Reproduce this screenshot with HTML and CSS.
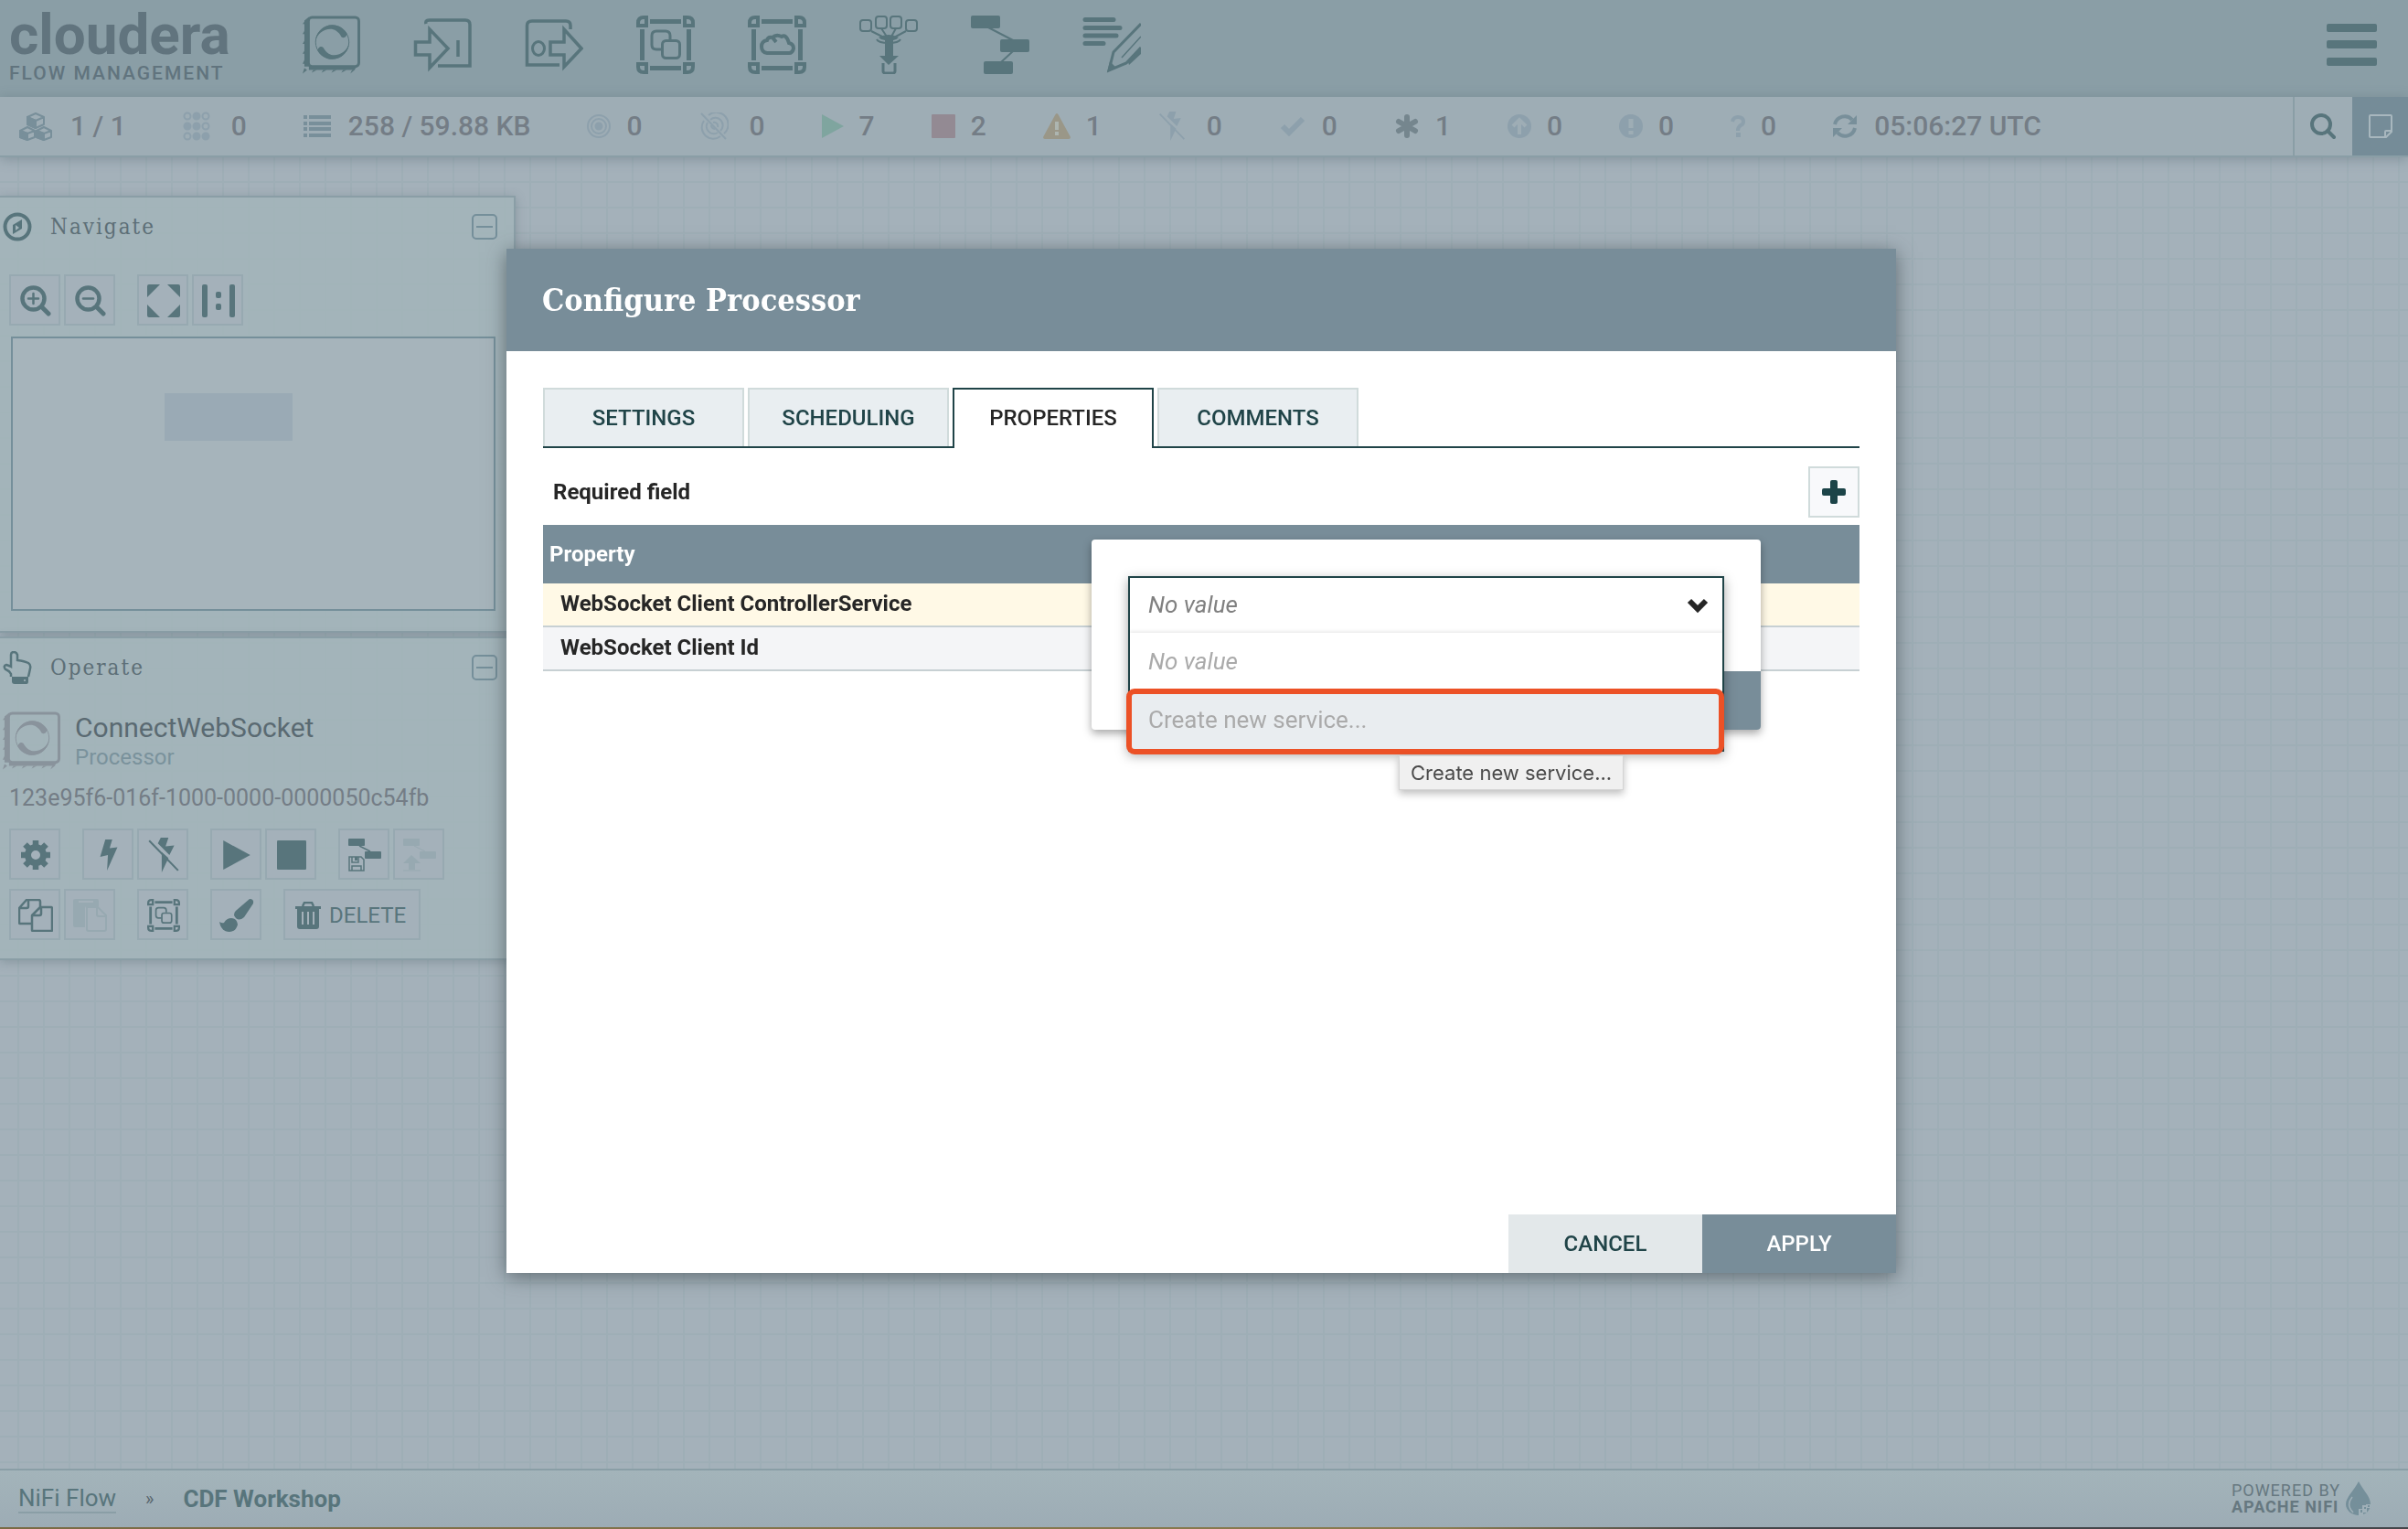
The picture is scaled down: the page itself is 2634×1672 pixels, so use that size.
FILE: index.html
```html
<!DOCTYPE html>
<html lang="en">
<head>
<meta charset="utf-8">
<title>Cloudera Flow Management</title>
<link rel="stylesheet" href="styles.css">
</head>
<body>
<svg class="sprite" aria-hidden="true">
  <symbol id="i-processor" viewBox="-1 0 65 64">
    <rect x="6.500" y="1.500" width="56" height="54.500" rx="4" fill="none" stroke="currentColor" stroke-width="3"/>
    <path d="M7 1L2 5V60H7ZM2 56H62L63 54L57 60H2Z" fill="currentColor"/>
    <path d="M3 5L0 9H3ZM3 15L0 20H3ZM3 26L0 31H3ZM3 37L0 42H3ZM3 47L0 53H3ZM2 58L0 64L5 60ZM12 60L10 63L16 60ZM23 60L21 63L27 60ZM34 60L32 63L38 60ZM45 60L43 63L49 60ZM55 60L53 64L59 59Z" fill="currentColor"/>
    <circle cx="33" cy="29" r="18.500" fill="none" stroke="currentColor"/>
    <path d="M14 29C15 18 23 10 33 10C40 10 46 14 49 19C50 22 46 26 43 23C40 17 35 14.500 31 14.500C23 14.500 16 20 14 29Z" fill="currentColor"/>
    <path d="M52 29C51 40 43 48 33 48C26 48 20 44 17 39C16 36 20 32 23 35C26 41 31 43.500 35 43.500C43 43.500 50 38 52 29Z" fill="currentColor"/>
  </symbol>
  <symbol id="i-input" viewBox="0 0 64 64" fill="none" stroke="currentColor" stroke-width="3.500">
    <path d="M14 9C13 5 16 5 18 5H57Q62 5 62 10V55H27M49 27V45"/>
    <path d="M2.500 29V43H18V57L38 36L18 15V29Z"/>
  </symbol>
  <symbol id="i-output" viewBox="0 0 64 64" fill="none" stroke="currentColor" stroke-width="3.500">
    <path d="M50 15V11Q50 6 45 6H8Q2.500 6 2.500 11V54H38"/>
    <ellipse cx="15" cy="36" rx="6.500" ry="7.500" stroke-width="3"/>
    <path d="M28 29V43H43V56L62 36L43 15V29Z"/>
  </symbol>
  <symbol id="i-frame" viewBox="0 0 64 64" fill="none" stroke="currentColor">
    <path d="M15 6.500H49M15 57.500H49M6.500 15V49M57.500 15V49" stroke-width="5"/>
    <path d="M11 11V2H8Q2 2 2 8V11ZM53 11V2H56Q62 2 62 8V11ZM11 53V62H8Q2 62 2 56V53ZM53 53V62H56Q62 62 62 56V53Z" stroke-width="4"/>
  </symbol>
  <symbol id="i-group" viewBox="0 0 64 64" fill="none" stroke="currentColor" stroke-width="3">
    <use href="#i-frame"/>
    <path d="M28 37H22Q17 37 17 32V22Q17 17 22 17H32Q37 17 37 22V26"/>
    <rect x="28.500" y="27.500" width="19" height="19" rx="4"/>
  </symbol>
  <symbol id="i-remote" viewBox="0 0 64 64" fill="none" stroke="currentColor">
    <use href="#i-frame"/>
    <path d="M21 41Q15 40 15 34Q15 28 21 27Q22 23 27 24Q31 20 37 23Q42 20 45 30Q50 31 50 36Q49 41 45 41ZM27 24L31 29" stroke-width="4"/>
  </symbol>
  <symbol id="i-funnel" viewBox="0 0 64 64" fill="none" stroke="currentColor" stroke-width="2">
    <rect x="1" y="5" width="12" height="12" rx="3"/><rect x="18" y="1" width="12" height="13" rx="3"/><rect x="34" y="1" width="12" height="13" rx="3"/><rect x="51" y="5" width="12" height="12" rx="3"/>
    <path d="M13 17L27 24M24 14L30 23M40 14L35 23M51 17L38 24M19 26Q21 30 32 30Q43 30 45 26"/>
    <path d="M26 52V61Q26 63 29 63H36Q39 63 39 61V52" stroke-width="3"/>
    <path d="M21 24Q32 18 43 24Q40 27 37 27V44H43L32 54L22 44H28V27Q24 27 21 24Z" fill="currentColor" stroke="none"/>
  </symbol>
  <symbol id="i-template" viewBox="0 0 64 64" fill="currentColor">
    <rect width="32" height="14" rx="2"/><rect x="32" y="26" width="32" height="14" rx="2"/><rect x="14" y="50" width="32" height="14" rx="2"/>
    <path d="M19 13L46 27M46 39L33 51" stroke="currentColor" stroke-width="2"/>
  </symbol>
  <symbol id="i-label" viewBox="0 0 64 64" fill="none" stroke="currentColor">
    <path d="M3 4.500H34M3 13.500H41M3 22H37M3 30.500H23" stroke-width="5" stroke-linecap="round"/>
    <path d="M64 9L34 40L29 60L48 52L64 35" stroke-width="3"/>
    <path d="M43 46L64 23" stroke-width="1.500"/>
    <path d="M30 50L27 62L37 57ZM50 51L64 35V42L51 54Z" fill="currentColor" stroke="none"/>
  </symbol>
  <symbol id="i-cubes" viewBox="0 0 38 32" fill="none" stroke="currentColor" stroke-width="2" stroke-linejoin="round">
    <path d="M19 2L28 6V14L19 18L10 14V6ZM10 6L19 10L28 6M10 17L18 21V28L10 31L2 28V21ZM2 21L10 24L18 21M28 17L36 21V28L28 31L20 28V21ZM20 21L28 24L36 21"/>
    <path d="M19 10V18L10 14V6ZM10 24V31L2 28V21ZM28 24V31L20 28V21Z" fill="currentColor"/>
  </symbol>
  <symbol id="i-threads" viewBox="0 0 30 32" fill="none" stroke="currentColor" stroke-width="2">
    <circle cx="5" cy="5" r="3.500"/><circle cx="25" cy="5" r="3.500"/><circle cx="25" cy="16" r="3.500"/><circle cx="5" cy="27" r="3.500"/>
    <g fill="currentColor"><circle cx="15" cy="5" r="3.500"/><circle cx="5" cy="16" r="3.500"/><circle cx="15" cy="16" r="3.500"/><circle cx="15" cy="27" r="3.500"/><circle cx="25" cy="27" r="3.500"/></g>
  </symbol>
  <symbol id="i-list" viewBox="0 0 30 24"><path d="M0 2H4M6 2H30M0 9H4M6 9H30M0 15H4M6 15H30M0 22H4M6 22H30" stroke="currentColor" stroke-width="4"/></symbol>
  <symbol id="i-target" viewBox="0 0 26 26" fill="none" stroke="currentColor" stroke-width="2"><circle cx="13" cy="13" r="12"/><circle cx="13" cy="13" r="8"/><circle cx="13" cy="13" r="3.500" fill="currentColor"/></symbol>
  <symbol id="i-target-off" viewBox="0 0 30 30" fill="none" stroke="currentColor" stroke-width="2"><path d="M9 3A12.500 12.500 0 0 1 26 23M22 26A12.500 12.500 0 0 1 4 9M11 8A8 8 0 0 1 22 20M19 22A8 8 0 0 1 8 11M14 11A4 4 0 0 1 19 16M16 18A4 4 0 0 1 12 14M1 1L28 29"/></symbol>
  <symbol id="i-play" viewBox="0 0 24 26"><path d="M0 0L24 13L0 26Z" fill="currentColor"/></symbol>
  <symbol id="i-stop" viewBox="0 0 26 26"><rect width="26" height="26" rx="1" fill="currentColor"/></symbol>
  <symbol id="i-warn" viewBox="0 0 30 28"><path d="M15 0Q16 0 17 2L30 26Q30 28 28 28H2Q0 28 0 26L13 2Q14 0 15 0Z" fill="currentColor"/><path d="M15 9V18M15 20V24" stroke="#adb5b0" stroke-width="4"/></symbol>
  <symbol id="i-bolt" viewBox="0 0 20 36"><path d="M6 0H14L11 10L20 9L8 36L9 18L0 20Z" fill="currentColor"/></symbol>
  <symbol id="i-bolt-off" viewBox="0 0 32 36"><path d="M13 0H21L18 9L27 8L22 18L10 6ZM14 15L21 21L14 36Z" fill="currentColor"/><path d="M1 3L31 34" stroke="currentColor" stroke-width="2"/></symbol>
  <symbol id="i-check" viewBox="0 0 28 22"><path d="M3 11L10 18L25 3" fill="none" stroke="currentColor" stroke-width="6"/></symbol>
  <symbol id="i-asterisk" viewBox="0 0 26 26"><path d="M13 3V23M4 8L22 18M4 18L22 8" stroke="currentColor" stroke-width="6" stroke-linecap="round"/></symbol>
  <symbol id="i-up" viewBox="0 0 26 26"><circle cx="13" cy="13" r="13" fill="currentColor"/><path d="M13 22V7M6 13L13 6L20 13" fill="none" stroke="#9eadb5" stroke-width="4"/></symbol>
  <symbol id="i-exclaim" viewBox="0 0 26 26"><circle cx="13" cy="13" r="13" fill="currentColor"/><path d="M13 5V15M13 18V22" stroke="#9eadb5" stroke-width="5"/></symbol>
  <symbol id="i-question" viewBox="0 0 16 26"><path d="M2 8Q3 3 8 3Q14 3 14 8Q14 11 11 12Q8 14 8 18" fill="none" stroke="currentColor" stroke-width="4"/><rect x="6" y="20" width="5" height="5" fill="currentColor"/></symbol>
  <symbol id="i-refresh" viewBox="0 0 26 26" fill="none" stroke="currentColor" stroke-width="4"><path d="M2 11A11 11 0 0 1 21 6M24 15A11 11 0 0 1 5 20"/><path d="M26 1V11H16ZM0 25V15H10Z" fill="currentColor" stroke="none"/></symbol>
  <symbol id="i-search" viewBox="0 0 28 28" fill="none" stroke="currentColor"><circle cx="12" cy="12" r="10" stroke-width="4"/><path d="M19 19L26 26" stroke-width="4" stroke-linecap="round"/></symbol>
  <symbol id="i-note" viewBox="0 0 26 26" fill="none" stroke="currentColor" stroke-width="2"><path d="M2 1H24Q25 1 25 2V19L19 25H2Q1 25 1 24V2Q1 1 2 1ZM25 18H19Q18 18 18 19V25"/></symbol>
  <symbol id="i-menu" viewBox="0 0 56 46"><path d="M2 0H53Q55 0 55 2V7Q55 9 53 9H2Q0 9 0 7V2Q0 0 2 0ZM2 18H53Q55 18 55 20V25Q55 27 53 27H2Q0 27 0 25V20Q0 18 2 18ZM2 37H53Q55 37 55 39V44Q55 46 53 46H2Q0 46 0 44V39Q0 37 2 37Z" fill="currentColor"/></symbol>
  <symbol id="i-compass" viewBox="0 0 32 32"><circle cx="16" cy="16" r="13.500" fill="none" stroke="currentColor" stroke-width="4"/><path d="M21 8V18L11 24V14Z" fill="currentColor"/><path d="M14 14L18 17L14 20Z" fill="#a3b4ba"/></symbol>
  <symbol id="i-collapse" viewBox="0 0 28 28" fill="none" stroke="currentColor" stroke-width="2"><rect x="1" y="1" width="26" height="26" rx="4"/><path d="M5 14H23"/></symbol>
  <symbol id="i-zoom-in" viewBox="0 0 34 34" fill="none" stroke="currentColor" stroke-linecap="round"><circle cx="14.500" cy="14.500" r="12" stroke-width="4.500"/><path d="M24 24L31 31" stroke-width="5"/><path d="M9 14.500H20M14.500 9V20" stroke-width="2.500"/></symbol>
  <symbol id="i-zoom-out" viewBox="0 0 34 34" fill="none" stroke="currentColor" stroke-linecap="round"><circle cx="14.500" cy="14.500" r="12" stroke-width="4.500"/><path d="M24 24L31 31" stroke-width="5"/><path d="M9 14.500H20" stroke-width="2.500"/></symbol>
  <symbol id="i-fit" viewBox="0 0 36 36"><path d="M2 0H14L0 14V2Q0 0 2 0ZM22 0H34Q36 0 36 2V14ZM0 22L14 36H2Q0 36 0 34ZM36 22V34Q36 36 34 36H22Z" fill="currentColor"/></symbol>
  <symbol id="i-actual" viewBox="0 0 36 36" fill="currentColor"><rect width="6" height="36" rx="2"/><rect x="30" width="6" height="36" rx="2"/><rect x="15" y="8" width="6" height="7" rx="2"/><rect x="15" y="21" width="6" height="7" rx="2"/></symbol>
  <symbol id="i-hand" viewBox="0 0 32 36"><path d="M9 28V25C7 21 5 21 3 20Q0 16 4 15Q7 16 9 17V4Q9 1 12 1Q15 1 16 4V10Q24 11 28 13Q31 15 30 19Q29 24 28 28" fill="none" stroke="currentColor" stroke-width="2.500"/><path d="M10 28H28V33Q28 36 26 36H13Q10 36 10 33Z" fill="currentColor"/><circle cx="24" cy="32" r="1" fill="#a3b4ba"/></symbol>
  <symbol id="i-gear" viewBox="0 0 32 32" fill="none" stroke="currentColor"><circle cx="16" cy="16" r="8.500" stroke-width="7"/><path d="M16 0V6M16 26V32M0 16H6M26 16H32M4.500 4.500L9 9M23 23L27.500 27.500M4.500 27.500L9 23M23 9L27.500 4.500" stroke-width="6.500"/></symbol>
  <symbol id="i-template-save" viewBox="0 0 36 36"><g fill="currentColor"><rect width="18" height="8" rx="1"/><rect x="18" y="14" width="18" height="8" rx="1"/></g><path d="M12 8L24 14M1 20H14L17 23V35H1ZM4 20V26H11V20M4 35V30H14V35" fill="none" stroke="currentColor" stroke-width="1.500"/><path d="M7 20H10V24H7Z" fill="currentColor"/></symbol>
  <symbol id="i-template-upload" viewBox="0 0 36 36" fill="currentColor"><rect width="18" height="8" rx="1"/><rect x="18" y="14" width="18" height="8" rx="1"/><path d="M12 8L24 14M0 35H19" stroke="currentColor"/><path d="M9 18L19 27H13V34H6V27H0Z"/></symbol>
  <symbol id="i-copy" viewBox="0 0 38 36" fill="none" stroke="currentColor" stroke-width="2.500" stroke-linejoin="round"><path d="M14 27H2Q1 27 1 26V10L9 1H22Q24 1 24 3V9M1 10H9Q11 10 11 8V1M15 18L24 9H36Q37 9 37 11V34Q37 35 36 35H16Q15 35 15 34ZM15 18H23Q25 18 25 16V9"/></symbol>
  <symbol id="i-paste" viewBox="0 0 38 36"><path d="M3 0H26Q28 0 28 2V8H15Q13 8 13 10V31H2Q0 31 0 29V2Q0 0 3 0Z" fill="currentColor"/><path d="M6 3H22" stroke="#a4b1ba" stroke-width="2"/><path d="M15 9H27L36 18V33Q36 35 34 35H17Q15 35 15 33ZM26 9V17Q26 19 28 19H36" fill="none" stroke="currentColor" stroke-width="2"/></symbol>
  <symbol id="i-brush" viewBox="0 0 38 36" fill="currentColor"><path d="M33 0Q38 0 37 5L27 20Q20 26 16 18Q16 14 19 12Z"/><path d="M13 21Q19 21 20 28Q18 36 11 36Q2 36 0 25Q3 27 5 26Q8 21 13 21Z"/></symbol>
  <symbol id="i-trash" viewBox="0 0 28 30"><path d="M0 5H28V8H26V27Q26 30 23 30H5Q2 30 2 27V8H0Z" fill="currentColor"/><path d="M8 11V25M14 11V25M20 11V25" stroke="#a4b1ba" stroke-width="2"/><path d="M8 5L10 1H18L20 5" fill="none" stroke="currentColor" stroke-width="2.500"/></symbol>
  <symbol id="i-plus" viewBox="0 0 26 26"><path d="M11 0H15Q17 0 17 2V9H24Q26 9 26 11V15Q26 17 24 17H17V24Q17 26 15 26H11Q9 26 9 24V17H2Q0 17 0 15V11Q0 9 2 9H9V2Q9 0 11 0Z" fill="currentColor"/></symbol>
  <symbol id="i-chevron" viewBox="0 0 24 18"><path d="M3 4L12 13L21 4" fill="none" stroke="currentColor" stroke-width="6"/></symbol>
  <symbol id="i-drop" viewBox="0 0 28 38"><path d="M14 0C19 10 27 16 27 25C27 32 21 37 14 37C7 37 0 32 0 25C0 17 9 10 14 0Z" fill="currentColor"/><path d="M7 17C2 23 3 29 8 34" fill="none" stroke="#a0b0b8" stroke-width="1.500"/><path d="M14 30H18V26H22V25H27V29H23V34H19V38H14Z" fill="#a0b0b8"/><path d="M16 31H18V34H16ZM20 28H22V30H20ZM24 26H26V28H24Z" fill="currentColor"/></symbol>
</svg>

<header class="topbar">
  <div class="logo"><span class="logo-name">cloudera</span><span class="logo-sub">FLOW MANAGEMENT</span></div>
  <nav class="components" aria-label="Components">
    <button type="button" aria-label="Processor"><svg width="64" height="64"><use href="#i-processor"/></svg></button>
    <button type="button" aria-label="Input port"><svg width="64" height="64"><use href="#i-input"/></svg></button>
    <button type="button" aria-label="Output port"><svg width="64" height="64"><use href="#i-output"/></svg></button>
    <button type="button" aria-label="Process group"><svg width="64" height="64"><use href="#i-group"/></svg></button>
    <button type="button" aria-label="Remote process group"><svg width="64" height="64"><use href="#i-remote"/></svg></button>
    <button type="button" aria-label="Funnel"><svg width="64" height="64"><use href="#i-funnel"/></svg></button>
    <button type="button" aria-label="Template"><svg width="64" height="64"><use href="#i-template"/></svg></button>
    <button type="button" aria-label="Label"><svg width="64" height="64"><use href="#i-label"/></svg></button>
  </nav>
  <button type="button" class="menu" aria-label="Menu"><svg width="56" height="46"><use href="#i-menu"/></svg></button>
</header>

<div class="status">
  <ul class="stats">
    <li class="mid"><svg width="38" height="32"><use href="#i-cubes"/></svg>1 / 1</li>
    <li class="wide"><svg width="30" height="32"><use href="#i-threads"/></svg>0</li>
    <li class="mid"><svg width="30" height="24"><use href="#i-list"/></svg>258 / 59.88 KB</li>
    <li><svg width="26" height="26"><use href="#i-target"/></svg>0</li>
    <li class="wide"><svg width="32" height="30"><use href="#i-target-off"/></svg>0</li>
    <li class="running"><svg width="24" height="26"><use href="#i-play"/></svg>7</li>
    <li class="stopped"><svg width="26" height="26"><use href="#i-stop"/></svg>2</li>
    <li class="invalid"><svg width="30" height="28"><use href="#i-warn"/></svg>1</li>
    <li class="wide"><svg width="30" height="32"><use href="#i-bolt-off"/></svg>0</li>
    <li><svg width="30" height="22"><use href="#i-check"/></svg>0</li>
    <li class="strong"><svg width="28" height="26"><use href="#i-asterisk"/></svg>1</li>
    <li><svg width="26" height="26"><use href="#i-up"/></svg>0</li>
    <li><svg width="26" height="26"><use href="#i-exclaim"/></svg>0</li>
    <li><svg width="16" height="26"><use href="#i-question"/></svg>0</li>
    <li class="mid"><svg width="26" height="26"><use href="#i-refresh"/></svg>05:06:27 UTC</li>
  </ul>
  <button type="button" class="search" aria-label="Search"><svg width="28" height="28"><use href="#i-search"/></svg></button>
  <button type="button" class="bulletins" aria-label="Bulletins"><svg width="26" height="26"><use href="#i-note"/></svg></button>
</div>

<main class="canvas">
  <section class="panel">
    <div class="panel-head">
      <svg width="32" height="32"><use href="#i-compass"/></svg><h2>Navigate</h2>
      <button type="button" class="collapse" aria-label="Collapse"><svg width="28" height="28"><use href="#i-collapse"/></svg></button>
    </div>
    <div class="tools">
      <button type="button" aria-label="Zoom in"><svg width="34" height="34"><use href="#i-zoom-in"/></svg></button>
      <button type="button" aria-label="Zoom out"><svg width="34" height="34"><use href="#i-zoom-out"/></svg></button>
      <button type="button" class="split" aria-label="Fit"><svg width="36" height="36"><use href="#i-fit"/></svg></button>
      <button type="button" aria-label="Actual size"><svg width="36" height="36"><use href="#i-actual"/></svg></button>
    </div>
    <div class="birdseye"><div class="birdseye-item"></div></div>
  </section>
  <section class="panel">
    <div class="panel-head">
      <svg width="32" height="36"><use href="#i-hand"/></svg><h2>Operate</h2>
      <button type="button" class="collapse" aria-label="Collapse"><svg width="28" height="28"><use href="#i-collapse"/></svg></button>
    </div>
    <div class="selection">
      <svg width="64" height="64"><use href="#i-processor"/></svg>
      <div><div class="selection-name">ConnectWebSocket</div><div class="selection-type">Processor</div></div>
    </div>
    <div class="uuid">123e95f6-016f-1000-0000-0000050c54fb</div>
    <div class="tools">
      <button type="button" aria-label="Configure"><svg width="32" height="32"><use href="#i-gear"/></svg></button>
      <button type="button" class="split" aria-label="Enable"><svg width="20" height="34"><use href="#i-bolt"/></svg></button>
      <button type="button" aria-label="Disable"><svg width="34" height="38"><use href="#i-bolt-off"/></svg></button>
      <button type="button" class="split" aria-label="Start"><svg width="30" height="32"><use href="#i-play"/></svg></button>
      <button type="button" aria-label="Stop"><svg width="32" height="32"><use href="#i-stop"/></svg></button>
      <button type="button" class="split" aria-label="Create template"><svg width="36" height="36"><use href="#i-template-save"/></svg></button>
      <button type="button" disabled aria-label="Upload template"><svg width="36" height="36"><use href="#i-template-upload"/></svg></button>
    </div>
    <div class="tools second">
      <button type="button" aria-label="Copy"><svg width="38" height="36"><use href="#i-copy"/></svg></button>
      <button type="button" disabled aria-label="Paste"><svg width="38" height="36"><use href="#i-paste"/></svg></button>
      <button type="button" class="split" aria-label="Group"><svg width="36" height="36"><use href="#i-group"/></svg></button>
      <button type="button" class="split" aria-label="Change color"><svg width="38" height="36"><use href="#i-brush"/></svg></button>
      <button type="button" class="split delete"><svg width="28" height="30"><use href="#i-trash"/></svg>DELETE</button>
    </div>
  </section>
</main>

<footer class="bottombar">
  <nav class="crumbs" aria-label="Breadcrumb"><a href="#">NiFi Flow</a><span class="sep">»</span><strong>CDF Workshop</strong></nav>
  <div class="powered"><div>POWERED BY<br><b>APACHE NIFI</b></div><svg width="28" height="38"><use href="#i-drop"/></svg></div>
</footer>
<div class="desk-edge"></div>

<div class="overlay">
  <div class="dialog" role="dialog" aria-labelledby="dialog-title">
    <div class="dialog-head"><h1 id="dialog-title">Configure Processor</h1></div>
    <div class="dialog-body">
      <div class="tabs" role="tablist">
        <button type="button" role="tab">SETTINGS</button>
        <button type="button" role="tab">SCHEDULING</button>
        <button type="button" role="tab" aria-selected="true">PROPERTIES</button>
        <button type="button" role="tab">COMMENTS</button>
      </div>
      <div class="required"><span>Required field</span><button type="button" class="add" aria-label="Add property"><svg width="26" height="26"><use href="#i-plus"/></svg></button></div>
      <table class="properties">
        <thead><tr><th scope="col">Property</th></tr></thead>
        <tbody>
          <tr class="editing"><td>WebSocket Client ControllerService</td></tr>
          <tr><td>WebSocket Client Id</td></tr>
        </tbody>
      </table>
      <div class="editor">
        <div class="combo">
          <div class="combo-field">
            <select aria-label="WebSocket Client ControllerService"><option>No value</option></select>
            <svg width="24" height="18"><use href="#i-chevron"/></svg>
          </div>
          <ul class="options">
            <li class="unset">No value</li>
            <li class="hover">Create new service...</li>
          </ul>
          <div class="highlight"></div>
          <div class="tooltip" role="tooltip">Create new service...</div>
        </div>
        <div class="editor-actions"></div>
      </div>
    </div>
    <div class="dialog-actions"><button type="button" class="cancel">CANCEL</button><button type="button" class="apply">APPLY</button></div>
  </div>
</div>
</body>
</html>
```
FILE: styles.css
```css
* { box-sizing: border-box; }

body {
  margin: 0;
  min-height: 100vh;
  display: flex;
  flex-direction: column;
  overflow: hidden;
  font-family: Roboto, "Liberation Sans", sans-serif;
  font-size: 24px;
  line-height: 28px;
  color: #747d86;
  background: #a4b1ba;
}

h1, h2, ul { margin: 0; padding: 0; }
ul { list-style: none; }
svg { display: block; flex: none; }
button {
  margin: 0;
  padding: 0;
  border: 0;
  background: none;
  font: inherit;
  color: inherit;
}
.sprite { position: absolute; width: 0; height: 0; }

/* Top bar */
.topbar {
  display: flex;
  align-items: center;
  height: 106px;
  padding: 0 33px 8px 10px;
  background: #8a9ea6;
  color: #58757c;
}
.logo { width: 320px; color: #61747e; padding-top: 6px; }
.logo-name { display: block; font-size: 62px; font-weight: 700; line-height: 56px; }
.logo-sub { display: block; font-size: 21px; font-weight: 500; line-height: 28px; letter-spacing: 2px; white-space: nowrap; }
.components { display: flex; gap: 58px; flex: 1; }

/* Status bar */
.status {
  position: relative;
  display: flex;
  height: 66px;
  border-bottom: 2px solid #8a9ea6;
  background: #9eadb5;
  box-shadow: 0 2px 12px rgba(80, 100, 110, .4);
}
.stats { display: flex; flex: 1; align-items: center; gap: 62px; padding-left: 20px; font-size: 30px; font-weight: 500; white-space: nowrap; }
.stats li { display: flex; align-items: center; gap: 17px; }
.stats .mid { gap: 19px; }
.stats .wide { gap: 23px; }
.stats svg { color: #8da0ac; }
.stats .mid svg { color: #788f9a; }
.stats .running svg { color: #7fa59f; }
.stats .stopped svg { color: #938a93; }
.stats .invalid svg { color: #9a9788; }
.stats .strong svg { color: #75868e; }
.search { display: grid; place-items: center; width: 65px; padding-right: 2px; border-left: 2px solid #8a9ea6; color: #58757c; }
.bulletins { display: grid; place-items: center; width: 61px; background: #758c98; color: #a8b7be; }

/* Canvas */
.canvas {
  flex: 1;
  padding-top: 42px;
  background:
    linear-gradient(to right, #9eaeb6 2px, transparent 2px) 19px 26px / 28px 28px,
    linear-gradient(#9eaeb6 2px, transparent 2px) 19px 26px / 28px 28px,
    #a4b1ba;
}
.panel {
  width: 564px;
  margin-bottom: 4px;
  padding: 18px 18px 20px 10px;
  border: 2px solid #8a9ea6;
  border-left: 0;
  background: rgba(163, 180, 186, .92);
  box-shadow: 0 2px 10px rgba(80, 100, 110, .35);
}
.panel-head { display: flex; align-items: center; height: 28px; margin-left: -7px; color: #58757c; }
h2 {
  flex: 1;
  margin-left: 20px;
  font-family: "Roboto Slab", "DejaVu Serif Condensed", "DejaVu Serif", serif;
  font-size: 24px;
  font-weight: 400;
  letter-spacing: 2px;
  color: #5d6f77;
}
.collapse { color: #758f9a; }
.tools { display: flex; gap: 4px; margin-top: 38px; }
.tools button {
  display: grid;
  place-items: center;
  width: 56px;
  height: 56px;
  padding: 2px 0 0 2px;
  border: 2px solid #97a9b1;
  background: #a4b1ba;
  color: #58757c;
}
.tools .split { margin-left: 20px; }
.tools button:disabled { color: #97a9b1; }
.tools .delete { display: flex; align-items: center; gap: 9px; width: 150px; padding: 2px 0 0 11px; }
.birdseye { margin: 12px 2px 2px; height: 300px; padding: 60px 166px; border: 2px solid #758f9a; background: #a6b4bb; }
.birdseye-item { width: 140px; height: 52px; background: #9aaab5; }
.selection { display: flex; gap: 16px; margin: 34px 0 0 -8px; color: #89939c; }
.selection-name { font-size: 30px; line-height: 36px; color: #5a6a72; }
.selection-type { line-height: 28px; color: #7a929c; }
.uuid { margin-top: 17px; font-size: 25px; }
.uuid + .tools { margin-top: 19px; }
.tools.second { margin-top: 10px; }

/* Bottom bar */
.bottombar {
  display: flex;
  justify-content: space-between;
  align-items: center;
  height: 64px;
  padding: 0 40px 0 20px;
  border-top: 2px solid #8a9ea6;
  background: linear-gradient(#a3b4ba, #9dacb5);
  color: #58757c;
}
.crumbs { display: flex; align-items: center; font-size: 26px; line-height: 30px; }
.crumbs a { color: inherit; text-decoration: none; border-bottom: 2px solid #8a9ea6; }
.sep { margin: 0 32px; font-size: 20px; color: #58656d; }
.crumbs strong { font-weight: 700; }
.powered { display: flex; align-items: center; gap: 6px; font-size: 18px; line-height: 18px; letter-spacing: 1px; color: #667880; }
.powered svg { color: #758f9a; }
.desk-edge { height: 2px; background: linear-gradient(to right, #7a6b45, #8a7c50 60%, #44464a 72%); }

/* Dialog */
.overlay { position: fixed; inset: 0; display: flex; padding: 272px 560px 280px 554px; }
.dialog {
  flex: 1;
  display: flex;
  flex-direction: column;
  background: #fff;
  box-shadow: 0 4px 20px rgba(60, 70, 75, .65);
  color: #262626;
}
.dialog-head { display: flex; align-items: center; height: 112px; padding-left: 39px; background: #788d99; }
h1 { font-family: "Roboto Slab", "DejaVu Serif Condensed", "DejaVu Serif", serif; font-size: 34px; font-weight: 700; color: #fff; }
.dialog-body { position: relative; flex: 1; padding: 40px 40px 0; }
.tabs { display: flex; gap: 4px; box-shadow: inset 0 -2px #204448; }
.tabs button {
  width: 220px;
  height: 64px;
  margin-bottom: 2px;
  border: 2px solid #d0dbdb;
  border-bottom: 0;
  background: #e9eef1;
  font-weight: 500;
  color: #204448;
}
.tabs [aria-selected] { height: 66px; margin-bottom: 0; padding-bottom: 2px; border-color: #204448; background: #fff; color: #262626; }
.required { display: flex; align-items: center; justify-content: space-between; margin: 20px 0 8px; padding-left: 11px; font-weight: 700; }
.add { display: grid; place-items: center; width: 56px; height: 56px; border: 2px solid #d0dbdb; background: #f8f9fb; color: #1c4448; }
.properties { width: 100%; border-collapse: separate; border-spacing: 0; text-align: left; font-weight: 700; }
.properties th { height: 64px; padding: 0 7px; background: #788d99; color: #fff; }
.properties td { height: 48px; padding: 0 19px 2px; border-bottom: 2px solid #c7d0d3; background: #f4f5f7; }
.properties .editing td { background: #fff9e6; }

.editor {
  position: absolute;
  top: 206px;
  left: 640px;
  right: 148px;
  padding: 40px 40px 0;
  border-radius: 4px;
  background: #fff;
  box-shadow: 0 4px 10px rgba(0, 0, 0, .35);
}
.editor-actions { width: 212px; height: 64px; margin: 104px -40px 0 auto; border-radius: 0 0 4px 0; background: #788d99; }
.combo {
  position: absolute;
  inset: 40px 40px auto;
  border: 2px solid #204448;
  background: #fff;
  box-shadow: 0 4px 12px rgba(0, 0, 0, .35);
  font-size: 26px;
  color: #aaa;
}
.combo-field { display: flex; align-items: center; height: 60px; padding-right: 15px; color: #262626; }
.combo-field select {
  appearance: none;
  flex: 1;
  height: 60px;
  padding: 0 20px 2px;
  border: 0;
  background: none;
  font: italic 26px Roboto, sans-serif;
  color: #808080;
}
.options { box-shadow: 0 -2px 3px rgba(0, 0, 0, .08); }
.options li { height: 64px; padding: 0 20px; line-height: 62px; }
.options .unset { font-style: italic; }
.options .hover { background: #e9edf0; }
.highlight { position: absolute; inset: auto -2px -5px -4px; height: 72px; border: 6px solid #ec5126; border-radius: 9px; }
.tooltip {
  position: absolute;
  top: 194px;
  left: 294px;
  padding: 0 12px;
  border: 1px solid #d4d4d4;
  background: #f0f0f0;
  box-shadow: 0 4px 8px rgba(0, 0, 0, .25);
  font-family: Inter, sans-serif;
  font-size: 22px;
  line-height: 36px;
  white-space: nowrap;
  color: #4a4a4a;
}
.dialog-actions { display: flex; justify-content: flex-end; font-weight: 500; }
.dialog-actions button { width: 212px; height: 64px; }
.cancel { background: #e3e8ea; color: #204448; }
.apply { background: #788d99; color: #fff; }
```
